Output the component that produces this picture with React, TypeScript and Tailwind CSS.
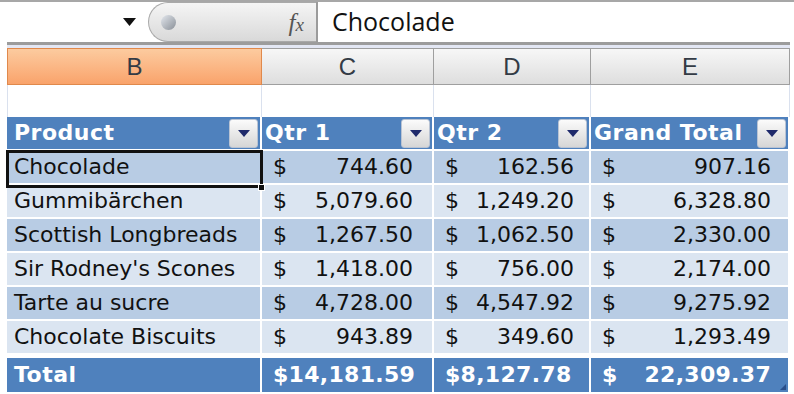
import { ReactNode } from 'react'

const rows = [
  ['Chocolade', '744.60', '162.56', '907.16'],
  ['Gummibärchen', '5,079.60', '1,249.20', '6,328.80'],
  ['Scottish Longbreads', '1,267.50', '1,062.50', '2,330.00'],
  ["Sir Rodney's Scones", '1,418.00', '756.00', '2,174.00'],
  ['Tarte au sucre', '4,728.00', '4,547.92', '9,275.92'],
  ['Chocolate Biscuits', '943.89', '349.60', '1,293.49'],
]

const font = { fontFamily: '"DejaVu Sans", Verdana, sans-serif' }

const FilterButton = () => (
  <div className="w-[29px] h-[29px] mr-[2px] rounded-[3px] border border-[#b9c3d3] bg-gradient-to-b from-[#fbfbfb] to-[#d6d6d6] flex items-center justify-center">
    <svg width="12" height="7" viewBox="0 0 12 7">
      <path d="M0 0h12L6 7z" fill="#1f2a6b" />
    </svg>
  </div>
)

const Money = ({ value, bold, pr = 'pr-[17px]' }: { value: string; bold?: boolean; pr?: string }) => (
  <div
    className={`flex items-center justify-between w-full pl-[11px] ${pr} ${
      bold ? 'font-bold text-white tracking-[0.3px]' : 'text-[#111]'
    }`}
  >
    <span>$</span>
    <span>{value}</span>
  </div>
)

const Cell = ({ w, bg, children }: { w: string; bg: string; children?: ReactNode }) => (
  <div className={`${w} ${bg} h-full flex items-center border-r-2 border-white`}>{children}</div>
)

export default function App() {
  return (
    <div className="w-[794px] h-[394px] bg-white overflow-hidden relative">
      {/* formula bar */}
      <div className="h-[42px] border-t-2 border-[#a7a7a7] flex items-center">
        <div className="w-[148px] h-full flex items-center justify-end pr-[12px]">
          <svg width="13" height="8" viewBox="0 0 13 8">
            <path d="M0 0h13L6.5 8z" fill="#111" />
          </svg>
        </div>
        <div className="w-[168px] h-[40px] rounded-l-[20px] border border-[#a9a9a9] border-r-0 bg-gradient-to-b from-[#f5f5f5] to-[#d9d9d9] flex items-center justify-between pl-[12px] pr-[12px]">
          <div className="w-[15px] h-[15px] rounded-full bg-gradient-to-br from-[#e4e8ee] to-[#8a9098]" />
          <span className="italic text-[#555] text-[25px] leading-none" style={{ fontFamily: '"Liberation Serif", serif' }}>
            f<span className="text-[19px]">x</span>
          </span>
        </div>
        <div className="w-[2px] h-full bg-[#9b9b9b]" />
        <div className="pl-[14px] text-[25px] text-[#111]" style={{ fontFamily: '"Open Sans", sans-serif' }}>
          Chocolade
        </div>
      </div>
      <div className="ml-[7px] w-[783px] h-[3px] bg-[#9c9c9c]" />
      <div className="ml-[7px] w-[783px] h-[3px] bg-[#e3e7f4]" />

      {/* column headers */}
      <div className="ml-[7px] flex h-[37px] text-[24px] text-[#333b45]" style={{ fontFamily: '"Liberation Sans", Arial, sans-serif' }}>
        <div className="w-[255px] border border-[#e0894c] bg-gradient-to-b from-[#fccb9f] to-[#f9a36b] flex items-center justify-center">B</div>
        <div className="w-[172px] border border-l-0 border-[#9f9f9f] bg-gradient-to-b from-[#f7f7f7] to-[#dedede] flex items-center justify-center">C</div>
        <div className="w-[157px] border border-l-0 border-[#9f9f9f] bg-gradient-to-b from-[#f7f7f7] to-[#dedede] flex items-center justify-center">D</div>
        <div className="w-[199px] border border-l-0 border-[#9f9f9f] bg-gradient-to-b from-[#f7f7f7] to-[#dedede] flex items-center justify-center">E</div>
      </div>

      {/* blank row */}
      <div className="ml-[7px] flex h-[32px]">
        <div className="w-[255px] border-r border-[#dae1ee] border-l" />
        <div className="w-[172px] border-r border-[#dae1ee]" />
        <div className="w-[157px] border-r border-[#dae1ee]" />
        <div className="w-[199px] border-r border-[#dae1ee]" />
      </div>

      <div className="ml-[7px] text-[22px] leading-none" style={font}>
        {/* header */}
        <div className="flex h-[34px] border-b-2 border-white font-bold text-white tracking-[0.5px]">
          <Cell w="w-[255px]" bg="bg-[#4f81bd]">
            <span className="pl-[7px] flex-1">Product</span>
            <FilterButton />
          </Cell>
          <Cell w="w-[172px]" bg="bg-[#4f81bd]">
            <span className="pl-[3px] flex-1">Qtr 1</span>
            <FilterButton />
          </Cell>
          <Cell w="w-[157px]" bg="bg-[#4f81bd]">
            <span className="pl-[3px] flex-1">Qtr 2</span>
            <FilterButton />
          </Cell>
          <Cell w="w-[199px]" bg="bg-[#4f81bd]">
            <span className="pl-[3px] flex-1">Grand Total</span>
            <FilterButton />
          </Cell>
        </div>

        {rows.map((r, i) => {
          const bg = i % 2 === 0 ? 'bg-[#b8cce4]' : 'bg-[#dbe5f1]'
          return (
            <div key={r[0]} className="flex h-[34px] border-b-2 border-white text-[#111]">
              <Cell w="w-[255px]" bg={bg}>
                <span className="pl-[7px]">{r[0]}</span>
              </Cell>
              <Cell w="w-[172px]" bg={bg}>
                <Money value={r[1]} pr="pr-[19px]" />
              </Cell>
              <Cell w="w-[157px]" bg={bg}>
                <Money value={r[2]} pr="pr-[15px]" />
              </Cell>
              <Cell w="w-[199px]" bg={bg}>
                <Money value={r[3]} />
              </Cell>
            </div>
          )
        })}

        {/* total */}
        <div className="flex h-[34px] mt-[3px] font-bold text-white">
          <Cell w="w-[255px]" bg="bg-[#4f81bd]">
            <span className="pl-[7px] tracking-[0.5px]">Total</span>
          </Cell>
          <Cell w="w-[172px]" bg="bg-[#4f81bd]">
            <span className="pl-[11px] tracking-[0.3px]">$14,181.59</span>
          </Cell>
          <Cell w="w-[157px]" bg="bg-[#4f81bd]">
            <span className="pl-[11px] tracking-[0.3px]">$8,127.78</span>
          </Cell>
          <Cell w="w-[199px]" bg="bg-[#4f81bd]">
            <div className="relative w-full h-full flex items-center">
              <Money value="22,309.37" bold />
              <svg className="absolute right-[1px] bottom-[1px]" width="7" height="7" viewBox="0 0 7 7">
                <path d="M6 0v6H0z" fill="#2b4f8a" />
              </svg>
            </div>
          </Cell>
        </div>
      </div>

      {/* selection */}
      <div className="absolute left-[6px] top-[150px] w-[257px] h-[38px] border-[3px] border-[#111]" />
      <div className="absolute left-[258px] top-[184px] w-[7px] h-[7px] bg-[#111] border border-white" />
    </div>
  )
}
